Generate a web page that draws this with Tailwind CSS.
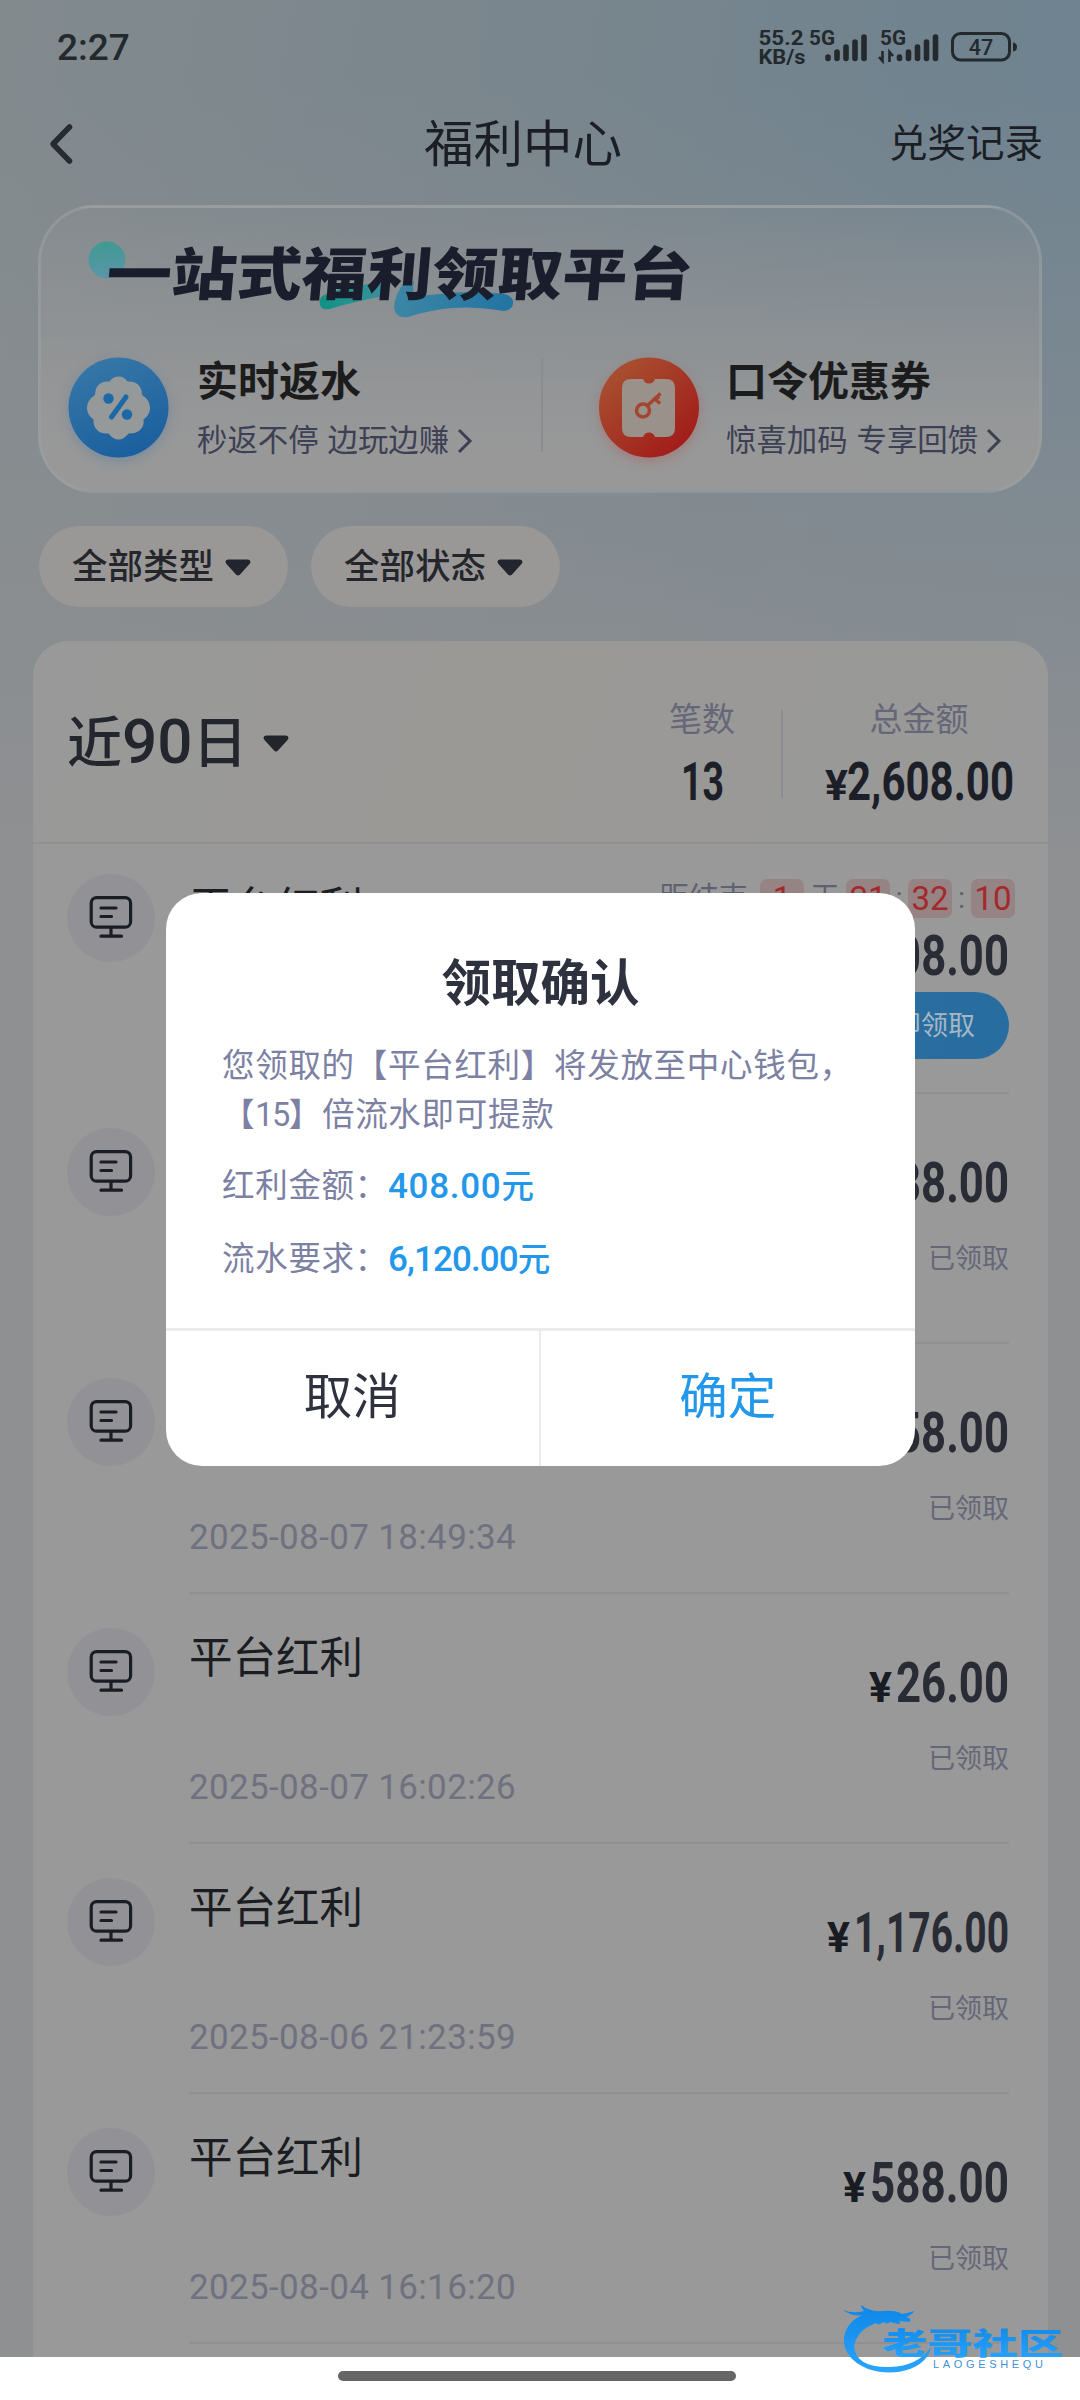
<!DOCTYPE html>
<html lang="zh-CN">
<head>
<meta charset="utf-8">
<title>福利中心</title>
<script src="https://cdn.jsdelivr.net/npm/@tailwindcss/browser@4"></script>
</head>
<body class="relative w-[1080px] h-[2400px] overflow-hidden bg-white font-['Roboto','Noto_Sans_CJK_SC',sans-serif] text-[#1c1e26]">

<svg class="absolute size-0">
  <defs>
    <symbol id="board" viewBox="0 0 44 44">
      <g fill="none" stroke="#1b1d25" stroke-width="3.2" stroke-linecap="round">
        <rect x="2.2" y="2.6" width="39.4" height="29.6" rx="5.5"/>
        <path d="M12 13H27M12 21.500H22.500M22 33V40M12 41.200H32.500"/>
      </g>
    </symbol>
    <symbol id="caret" viewBox="0 0 26 17">
      <path d="M3 0.500H23Q27 1.500 24.500 5L15 15.500Q13 17.300 11 15.500L1.500 5Q-1 1.500 3 0.500Z"/>
    </symbol>
    <linearGradient id="blue" x1="0.2" y1="0" x2="0.6" y2="1"><stop offset="0" stop-color="#3878a8"/><stop offset="1" stop-color="#1a5f9e"/></linearGradient>
    <linearGradient id="red" x1="0.1" y1="0.1" x2="0.8" y2="0.9"><stop offset="0" stop-color="#a85231"/><stop offset="1" stop-color="#a21d1a"/></linearGradient>
    <linearGradient id="dot" x1="0.5" y1="0" x2="0.6" y2="1"><stop offset="0" stop-color="#3f9a92"/><stop offset="1" stop-color="#5c95a8"/></linearGradient>
    <linearGradient id="sw1" x1="0" y1="0" x2="1" y2="0"><stop offset="0" stop-color="#0f9384"/><stop offset="1" stop-color="#3c8f9c"/></linearGradient>
    <linearGradient id="sw2" x1="0" y1="0" x2="1" y2="0"><stop offset="0" stop-color="#3c86a4"/><stop offset="1" stop-color="#2374a4"/></linearGradient>
    <linearGradient id="wm" x1="0" y1="0" x2="0" y2="1"><stop offset="0" stop-color="#0d86e8"/><stop offset="1" stop-color="#2aa5fb"/></linearGradient>
  </defs>
</svg>

<div class="h-[2357px] overflow-hidden flex flex-col bg-[linear-gradient(to_bottom,#8f909300_80px,#8f9092_880px),linear-gradient(100deg,#828a8e_0%,#7a868d_35%,#70838f_65%,#6c8494_100%)]">

  <!-- status bar -->
  <div class="h-[95px] shrink-0 flex justify-between pl-[57px] pr-[63px]">
    <div class="pt-[25px] text-[37px] leading-[46px] font-medium text-[#23292d]">2:27</div>
    <svg class="w-[260px] h-[40px] mt-[28px]" viewBox="757 28 260 40" fill="#23292d" font-family="Roboto" font-weight="700" font-size="19.500">
      <text x="758.500" y="45" textLength="45" lengthAdjust="spacingAndGlyphs">55.2</text>
      <text x="758.500" y="64" textLength="47" lengthAdjust="spacingAndGlyphs">KB/s</text>
      <text x="809" y="45" textLength="26" lengthAdjust="spacingAndGlyphs">5G</text>
      <text x="880" y="45" textLength="26" lengthAdjust="spacingAndGlyphs">5G</text>
      <g stroke="#23292d" stroke-width="5.6" stroke-linecap="round">
        <path d="M828 57V58.500M837 52V58.500M846 47V58.500M855 42V58.500M864 37V58.500"/>
        <path d="M899.500 57V58.500M908.500 52V58.500M917.500 47V58.500M926.500 42V58.500M935.500 37V58.500"/>
      </g>
      <path d="M882.500 51V61L879 57M889.500 62V52L893 56" fill="none" stroke="#23292d" stroke-width="2.6"/>
      <rect x="952.500" y="33.500" width="57" height="26.500" rx="8" fill="none" stroke="#23292d" stroke-width="3"/>
      <path d="M1013 42.500q4 0.500 4 4.500t-4 4.500z"/>
      <text x="981" y="54.500" text-anchor="middle" font-weight="500" font-size="21.500">47</text>
    </svg>
  </div>

  <!-- title bar -->
  <div class="h-[98px] shrink-0 grid grid-cols-[1fr_auto_1fr] items-center pl-[49px] pr-[37px]">
    <svg class="w-[26px] h-[44px]" viewBox="0 0 26 44" fill="none" stroke="#262a33" stroke-width="5.500" stroke-linecap="round" stroke-linejoin="round"><path d="M20.500 5L4 22L20.500 39"/></svg>
    <div class="pt-[3px] -ml-[46px] text-[49.5px] leading-none whitespace-nowrap">福利中心</div>
    <div class="pt-[1px] justify-self-end text-[38.5px] leading-none whitespace-nowrap">兑奖记录</div>
  </div>

  <!-- banner -->
  <div class="mx-[38px] mt-[12px] h-[288px] shrink-0 rounded-[57px] border-[3px] border-[#9aa0a4]/60 bg-[linear-gradient(to_bottom,#9999991a,#999999f2_85%)] flex flex-col">
    <svg class="ml-[41px] mt-[27px] w-[620px] h-[90px] shrink-0" viewBox="82 235 620 90">
      <circle cx="107" cy="260" r="18.500" fill="url(#dot)"/>
      <path d="M324 295Q350 284 384 283L384 296Q352 302 330 309Q320 311 319.500 302Q320 297 324 295Z" fill="url(#sw1)"/>
      <path d="M404 283Q394 296 394 308Q396 319 408 317Q430 310 452 308Q478 306 504 311Q514 310 513 301Q512 296 504 294Q470 290 440 294Q424 296 415 295Q412 290 414 281Z" fill="url(#sw2)"/>
      <text transform="translate(105 295) skewX(-5)" textLength="586" lengthAdjust="spacingAndGlyphs" font-family="Noto Sans CJK SC" font-weight="900" font-size="57" fill="#1a1d2b">一站式福利领取平台</text>
    </svg>
    <div class="mt-[29px] flex pl-[22px]">
      <div class="w-[478px] h-[120px] flex">
        <svg class="w-[114px] h-[120px] -ml-[3px] mt-[-3px] drop-shadow-[0_4px_6px_#4a79a066] shrink-0" viewBox="60 350 114 120">
          <circle cx="118.500" cy="406.500" r="50" fill="url(#blue)"/>
          <path d="M118.500 375.500Q124 375.500 127.500 380.500Q135 380 139 384.500Q142 388.500 142 394Q150 399 150 407Q150 414 143.500 418.500Q144.500 425 139.500 429.500Q135 433 128.500 432.500Q124 438.500 118.500 438.500Q113 438.500 108.500 432.500Q101 433 97.500 429.500Q93 425 93.500 418.500Q87 414 87 407Q87 399 95 394Q95 388.500 98 384.500Q102 380 109.500 380.500Q113 375.500 118.500 375.500Z" fill="#96999a"/>
          <path d="M126 396L111.500 416" stroke="#1d68a6" stroke-width="5" stroke-linecap="round"/>
          <circle cx="108.500" cy="397.500" r="5.200" fill="#1d68a6"/><circle cx="127" cy="413.500" r="5.200" fill="#1d68a6"/>
        </svg>
        <div class="ml-[23px] pt-[4px]">
          <div class="text-[41px] leading-[48px] font-bold text-[#1c1c1c]">实时返水</div>
          <div class="mt-[13px] flex items-center text-[30.4px] leading-[44px] text-[#3d4054] whitespace-nowrap"><span>秒返不停</span><span class="ml-[9px]">边玩边赚</span>
            <svg class="ml-[8px] w-[16px] h-[28px]" viewBox="0 0 16 28" fill="none" stroke="#3d4054" stroke-width="3"><path d="M2 3L13 14L2 25"/></svg></div>
        </div>
      </div>
      <div class="w-[2px] h-[94px] mt-[4px] bg-[#8b8c90]"></div>
      <div class="flex pl-[48px]">
        <svg class="w-[114px] h-[120px] mt-[-3px] drop-shadow-[0_4px_6px_#b0505066] shrink-0" viewBox="590 350 114 120">
          <circle cx="648" cy="406.500" r="50" fill="url(#red)"/>
          <path d="M630 378H642Q643.500 382.500 648 382.500Q652.500 382.500 654 378H665Q674 378 674 387V427Q674 436 665 436H654Q652.500 431.500 648 431.500Q643.500 431.500 642 436H630Q621 436 621 427V387Q621 378 630 378Z" fill="#9a918a"/>
          <g fill="none" stroke="#a4452f" stroke-width="3.500"><circle cx="642" cy="409.500" r="6.500"/><path d="M646.500 404.500L659.500 392.500M654 398L659 402.500M657 394V398"/></g>
        </svg>
        <div class="ml-[21px] pt-[4px]">
          <div class="text-[41px] leading-[48px] font-bold text-[#1c1c1c]">口令优惠券</div>
          <div class="mt-[13px] flex items-center text-[30.4px] leading-[44px] text-[#3d4054] whitespace-nowrap"><span>惊喜加码</span><span class="ml-[9px]">专享回馈</span>
            <svg class="ml-[8px] w-[16px] h-[28px]" viewBox="0 0 16 28" fill="none" stroke="#3d4054" stroke-width="3"><path d="M2 3L13 14L2 25"/></svg></div>
        </div>
      </div>
    </div>
  </div>

  <!-- filters -->
  <div class="mt-[33px] ml-[39px] h-[81px] shrink-0 flex gap-[23px] text-[35.5px] font-medium text-[#24262c]">
    <div class="w-[249px] pl-[33px] pt-[2px] rounded-full bg-[#999896] flex items-center gap-[11px]"><span>全部类型</span><svg class="w-[26px] h-[17px]" fill="#22242e"><use href="#caret"/></svg></div>
    <div class="w-[249px] pl-[33px] pt-[2px] rounded-full bg-[#999896] flex items-center gap-[11px]"><span>全部状态</span><svg class="w-[26px] h-[17px]" fill="#22242e"><use href="#caret"/></svg></div>
  </div>

  <!-- records -->
  <div class="mt-[34px] ml-[33px] w-[1015px] flex-1 rounded-t-[36px] bg-[#999]">
    <div class="h-[203px] rounded-t-[36px] border-b-2 border-[#8f9091] bg-[linear-gradient(110deg,#999_0%,#9a9996_45%,#999_100%)] flex">
      <div class="pl-[34px] pt-[70px] w-[608px] flex text-[#24262e] font-medium">
        <span class="text-[55px] leading-[64px]">近</span><span class="text-[62px] leading-[62px]">90</span><span class="text-[55px] leading-[64px]">日</span>
        <svg class="ml-[15px] mt-[24px] w-[26px] h-[17px]" fill="#22262a"><use href="#caret"/></svg>
      </div>
      <div class="w-[122px] pt-[61px] flex flex-col items-center">
        <div class="text-[33px] leading-[36px] text-[#656778]">笔数</div>
        <svg class="mt-[24px] w-[44px] h-[40px] overflow-visible" font-family="Roboto" font-weight="700" font-size="53" fill="#1c1e28"><text x="1" y="38" textLength="43" lengthAdjust="spacingAndGlyphs">13</text></svg>
      </div>
      <div class="w-[2px] h-[88px] mt-[69px] ml-[18px] bg-[#8b8c90]"></div>
      <div class="ml-[41px] w-[190px] pt-[61px] flex flex-col items-center">
        <div class="text-[33px] leading-[36px] text-[#656778]">总金额</div>
        <svg class="mt-[24px] w-[190px] h-[40px] overflow-visible" font-family="Roboto" font-weight="700" fill="#1c1e28"><text x="1" y="38" font-size="42" textLength="23" lengthAdjust="spacingAndGlyphs">¥</text><text x="23" y="38" font-size="53" textLength="167" lengthAdjust="spacingAndGlyphs">2,608.00</text></svg>
      </div>
    </div>
    <div id="list"></div>
  </div>
</div>

<!-- home indicator -->
<div class="h-[43px] flex justify-center pt-[14px]"><div class="w-[398px] h-[10px] rounded-full bg-[#666] -translate-x-[3px]"></div></div>

<!-- dialog -->
<div class="absolute left-[166px] top-[893px] w-[749px] h-[573px] rounded-[36px] bg-white flex flex-col">
  <div class="pt-[61px] text-center text-[49.5px] leading-[60px] font-bold text-[#2e313e]">领取确认</div>
  <div class="mt-[28px] ml-[56px] text-[32.5px] tracking-[0.700px] leading-[49px] text-[#7c81a3] whitespace-nowrap">
    <div>您领取的【平台红利】将发放至中心钱包，</div>
    <div>【<span class="tracking-[-1.500px]">15</span>】倍流水即可提款</div>
    <div class="mt-[22px] flex"><span>红利金额：</span><span class="text-[#2397ea] font-medium tracking-normal"><span class="text-[35px] tracking-[0.700px]">408.00</span>元</span></div>
    <div class="mt-[23px] flex"><span>流水要求：</span><span class="text-[#2397ea] font-medium tracking-normal"><span class="text-[35px] tracking-[-0.900px]">6,120.00</span>元</span></div>
  </div>
  <div class="mt-auto h-[138px] border-t-[3px] border-[#ebebed] grid grid-cols-2 text-[48.5px] leading-[134px] text-center">
    <div class="border-r-2 border-[#ebebed] text-[#2e313e]">取消</div>
    <div class="text-[#2397ea]">确定</div>
  </div>
</div>

<!-- watermark -->
<svg class="absolute left-[840px] top-[2300px] w-[230px] h-[80px]" viewBox="840 2300 230 80" fill="url(#wm)">
  <path d="M843 2310Q853 2314 864 2311Q861 2308 861 2305Q870 2312 882 2311Q896 2310 902 2314Q908 2313 914 2311Q912 2315 906 2317Q912 2318 910 2322L899 2321Q902 2324 898 2324L890 2322Q886 2325 884 2322Q878 2326 876 2323Q857 2330 854 2346Q856 2368 890 2367Q918 2366 931 2347Q928 2362 910 2369Q890 2376 868 2369Q842 2358 844 2337Q847 2322 862 2315Q852 2317 843 2310Z"/>
  <text transform="translate(882 2354) scale(1 .67)" textLength="181" lengthAdjust="spacingAndGlyphs" font-family="Noto Sans CJK SC" font-weight="900" font-size="44">老哥社区</text>
  <text x="933" y="2367.500" textLength="110" font-family="Liberation Sans" font-size="11" fill="#3f92d6">LAOGESHEQU</text>
</svg>

<script>
const rows = [
  {v:'408.00', w:138, claim:true},
  {v:'38.00', w:113, t:'2025-08-07 19:05:12'},
  {v:'58.00', w:113, t:'2025-08-07 18:49:34'},
  {v:'26.00', w:113, t:'2025-08-07 16:02:26'},
  {v:'1,176.00', w:155, t:'2025-08-06 21:23:59'},
  {v:'588.00', w:139, t:'2025-08-04 16:16:20'}
];
const amount = r => `<svg class="w-[200px] h-[40px] overflow-visible" font-family="Roboto" font-weight="700"><text x="${200-r.w-27}" y="39" font-size="43" fill="#191b22" textLength="23" lengthAdjust="spacingAndGlyphs">¥</text><text x="${200-r.w}" y="39" font-size="55" fill="#292b35" textLength="${r.w}" lengthAdjust="spacingAndGlyphs">${r.v}</text></svg>`;
const box = n => `<span class="w-[44px] h-[39px] rounded-[7px] bg-[#968383] text-[#a3292c] text-[33px] leading-[40px] text-center">${n}</span>`;
const claim = r => `<div class="flex flex-col items-end pt-[35px]">
  <div class="flex items-center h-[39px] -mr-[6px] text-[29.5px] text-[#5f6172]"><span class="mr-[12px]">距结束</span>${box(1)}<span class="w-[42px] text-center">天</span>${box(21)}<span class="w-[18px] text-center">:</span>${box(32)}<span class="w-[19px] text-center">:</span>${box(10)}</div>
  <div class="mt-[18px] h-[40px]">${amount(r)}</div>
  <div class="mt-[16px] w-[176px] h-[67px] rounded-full bg-linear-to-r from-[#2a6da3] to-[#286d9f] text-[#a5b7c4] text-[27px] leading-[68px] text-center">立即领取</div></div>`;
const done = r => `<div class="flex flex-col items-end pt-[69px]"><div class="h-[40px]">${amount(r)}</div><div class="mt-[36px] text-[27px] leading-[40px] text-[#656778]">已领取</div></div>`;
document.getElementById('list').innerHTML = rows.map(r => `<div class="h-[250px] flex pl-[34px] pr-[39px]">
  <div class="${r.claim ? 'mt-[30px]' : 'mt-[34px]'} size-[88px] shrink-0 rounded-full bg-[#929296] flex items-start justify-center"><svg class="mt-[21px] size-[44px]"><use href="#board"/></svg></div>
  <div class="ml-[34px] flex-1 border-b-2 border-[#8f9092] flex justify-between">
    <div class="pt-[40px]"><div class="text-[43.500px] leading-[50px] text-[#1b1d23]">平台红利</div><div class="mt-[79px] text-[35px] leading-[50px] tracking-[0.350px] text-[#6f7180]">${r.t || ''}</div></div>
    ${r.claim ? claim(r) : done(r)}
  </div></div>`).join('');
</script>
</body>
</html>
